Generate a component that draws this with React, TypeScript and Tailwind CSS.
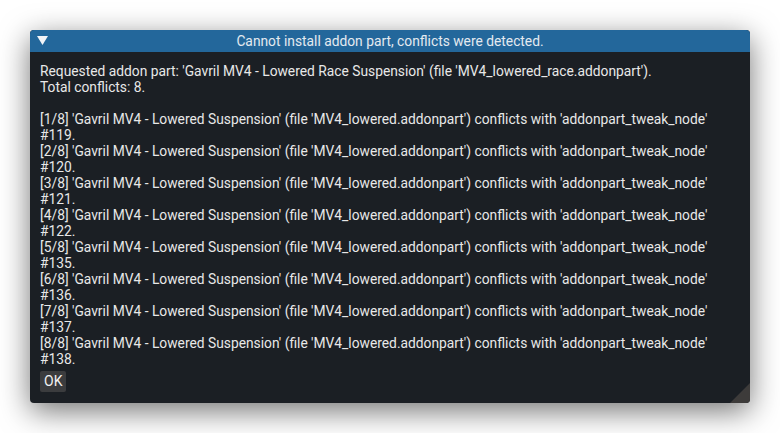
import React from 'react';

const conflicts = [
  { n: 1, id: 119 },
  { n: 2, id: 120 },
  { n: 3, id: 121 },
  { n: 4, id: 122 },
  { n: 5, id: 135 },
  { n: 6, id: 136 },
  { n: 7, id: 137 },
  { n: 8, id: 138 },
];

const App: React.FC = () => {
  return (
    <div className="w-[780px] h-[433px] bg-white pt-[30px] pl-[30px] overflow-hidden" style={{ fontFamily: 'Roboto, "Noto Sans", sans-serif' }}>
      <div className="relative w-[720px] h-[373px] rounded-[4px] bg-[#1b1f24] shadow-[0_8px_30px_rgba(0,0,0,0.55)] flex flex-col overflow-hidden">
        {/* Title bar */}
        <div className="relative h-[22px] bg-[#23679b] flex items-center justify-center shrink-0">
          <svg className="absolute left-[7px] top-[6px]" width="11" height="10" viewBox="0 0 11 10">
            <polygon points="0,0 11,0 5.5,9" fill="#f2f4f7" />
          </svg>
          <span className="text-[13.8px] leading-[22px] text-[#e4eaf0]">Cannot install addon part, conflicts were detected.</span>
        </div>

        {/* Body */}
        <div className="flex flex-col pl-[10px] pt-[11px] text-[13.8px] leading-[16px] text-[#e8e8e8]">
          <div>Requested addon part: 'Gavril MV4 - Lowered Race Suspension' (file 'MV4_lowered_race.addonpart').</div>
          <div>Total conflicts: 8.</div>
          <div className="h-[16px]" />
          {conflicts.map(c => (
            <React.Fragment key={c.n}>
              <div>[{c.n}/8] 'Gavril MV4 - Lowered Suspension' (file 'MV4_lowered.addonpart') conflicts with 'addonpart_tweak_node'</div>
              <div>#{c.id}.</div>
            </React.Fragment>
          ))}
          <div className="mt-[4px]">
            <button className="h-[21px] px-[4px] bg-[#3b3c3e] rounded-[2px] text-[14px] leading-[21px] text-[#f0f0f0]">OK</button>
          </div>
        </div>

        {/* Resize grip */}
        <svg className="absolute right-0 bottom-0" width="20" height="20" viewBox="0 0 20 20">
          <polygon points="20,0 20,20 0,20" fill="#3d3b3a" />
        </svg>
      </div>
    </div>
  );
};

export default App;
